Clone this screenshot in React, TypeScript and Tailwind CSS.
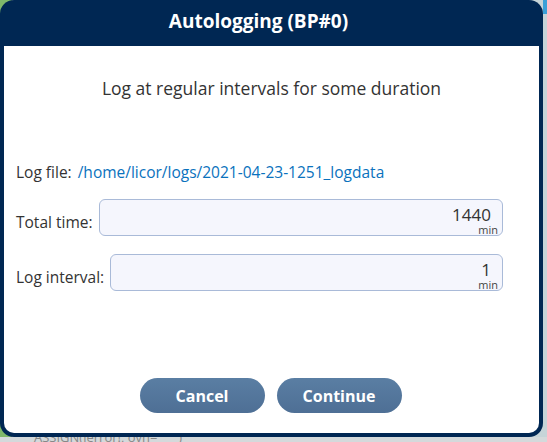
import React from 'react';

const NumberField: React.FC<{ value: string; unit: string }> = ({ value, unit }) => {
  return (
    <div className="flex-1 h-[37px] rounded-[6px] border border-[#a9bad8] bg-[#f5f6fd] pr-[4px] text-right">
      <div className="pt-[6px] pr-[7px] text-[17px] leading-[18px] text-[#333]">{value}</div>
      <div className="text-[11px] leading-[11px] text-[#444]">{unit}</div>
    </div>
  );
};

const App: React.FC = () => {
  return (
    <div
      className="w-[547px] h-[442px] overflow-hidden bg-[#c6d4d8] flex flex-col"
      style={{ fontFamily: '"Open Sans", "Noto Sans", sans-serif' }}
    >
      <div className="flex h-[437px] bg-[linear-gradient(90deg,#7fb86a_0px,#7fb86a_12px,#c6d4d8_12px)]">
        <div className="w-[543px] h-[437px] bg-[#002753] rounded-[14px] px-[4px] pb-[4px] flex flex-col">
          <div className="h-[46px] flex items-center justify-center pb-[3px] pr-[26px]">
            <h1 className="text-white text-[19px] font-bold">Autologging (BP#0)</h1>
          </div>
          <div className="flex-1 bg-white rounded-b-[10px] flex flex-col">
            <p className="mt-[29px] text-center text-[17.5px] text-[#333]">
              Log at regular intervals for some duration
            </p>
            <div className="mt-[60px] ml-[12px] flex items-center gap-[6px] text-[15.5px]">
              <span className="text-[#333]">Log file:</span>
              <span className="text-[#0a72bd]">/home/licor/logs/2021-04-23-1251_logdata</span>
            </div>
            <div className="mt-[14px] ml-[12px] mr-[36px] flex items-end gap-[6px]">
              <span className="text-[15.5px] text-[#333] pb-[1px]">Total time:</span>
              <NumberField value="1440" unit="min" />
            </div>
            <div className="mt-[18px] ml-[12px] mr-[36px] flex items-end gap-[6px]">
              <span className="text-[15.5px] text-[#333] pb-[1px]">Log interval:</span>
              <NumberField value="1" unit="min" />
            </div>
            <div className="mt-auto mb-[20px] flex justify-center gap-[12px] pr-[2px]">
              <button className="w-[125px] h-[35px] rounded-full bg-[linear-gradient(#5a7ea3,#4e6f95)] text-white font-bold text-[16px]">
                Cancel
              </button>
              <button className="w-[125px] h-[35px] rounded-full bg-[linear-gradient(#5a7ea3,#4e6f95)] text-white font-bold text-[16px]">
                Continue
              </button>
            </div>
          </div>
        </div>
        <div className="flex-1 bg-[linear-gradient(#3aa0d8_0px,#3aa0d8_14px,#c6d4d8_14px)]"></div>
      </div>
      <div className="h-[5px] overflow-hidden bg-[#d4d9db] pl-[34px]">
        <div className="text-[13px] leading-[13px] -mt-[6px] text-[#888]">ASSIGN(lerror!, ovn="""")</div>
      </div>
    </div>
  );
};

export default App;
